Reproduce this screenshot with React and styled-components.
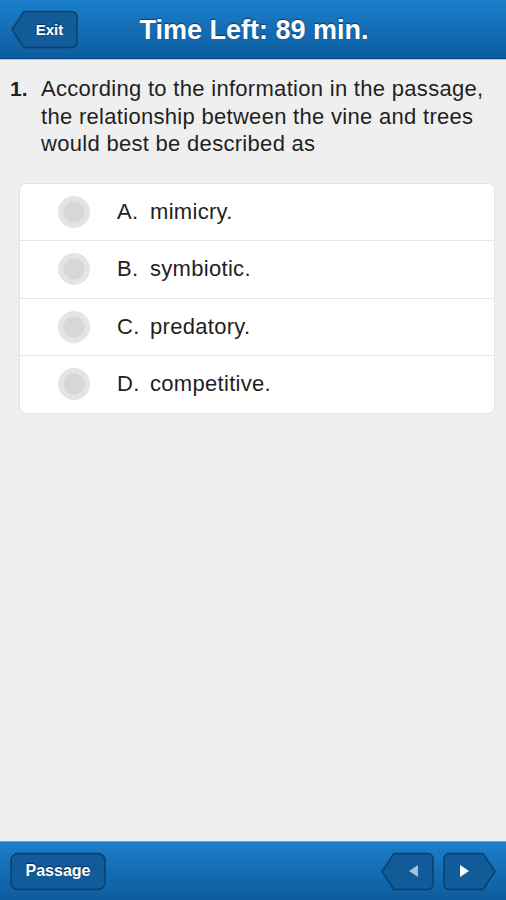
import React from "react";
import styled, { createGlobalStyle } from "styled-components";

const colors = {
    barTop: "#1b7fcb",
    barBottom: "#0d5c9e",
    barEdge: "#0a4a82",
    buttonFill: "#115b98",
    buttonStroke: "#0a3f6e",
    page: "#efefef",
    text: "#1f1f1f",
    line: "#e6e6e6",
    radioOuter: "#e4e4e4",
    radioInner: "#d7d7d7",
};

const GlobalStyle = createGlobalStyle`
    html, body {
        margin: 0;
        padding: 0;
        background: ${colors.page};
        font-family: "Liberation Sans", Arial, Helvetica, sans-serif;
    }
`;

const Screen = styled.div`
    width: 506px;
    height: 900px;
    display: flex;
    flex-direction: column;
    background: ${colors.page};
    overflow: hidden;
`;

const TopBar = styled.header`
    height: 58px;
    flex: none;
    display: grid;
    grid-template-columns: 1fr auto 1fr;
    align-items: center;
    padding: 0 11px;
    background: linear-gradient(${colors.barTop}, ${colors.barBottom});
    border-bottom: 1px solid ${colors.barEdge};
    box-shadow: 0 1px 0 #b9bec4;
`;

const Title = styled.h1`
    margin: 2px 0 0 2px;
    font-size: 27px;
    font-weight: bold;
    color: #fff;
    text-shadow: 0 -1px 1px rgba(0, 20, 60, 0.6);
`;

const ShapeButton = styled.button`
    position: relative;
    width: ${(p) => p.$w}px;
    height: 39px;
    padding: 0;
    padding-left: ${(p) => p.$padLeft || 0}px;
    padding-right: ${(p) => p.$padRight || 0}px;
    border: none;
    background: transparent;
    display: flex;
    align-items: center;
    justify-content: center;
    font-family: inherit;
    font-size: ${(p) => p.$size || 16}px;
    font-weight: bold;
    color: #fff;
    text-shadow: 0 -1px 1px rgba(0, 20, 60, 0.7);
    cursor: pointer;

    svg.shape {
        position: absolute;
        inset: 0;
    }
    span, svg.glyph {
        position: relative;
    }
`;

const Body = styled.main`
    flex: 1;
    padding: 16px 11px 0 10px;
`;

const Question = styled.div`
    display: flex;
    gap: 10px;
    font-size: 22px;
    letter-spacing: 0.3px;
    line-height: 27.5px;
    color: ${colors.text};
`;

const Number = styled.span`
    font-weight: bold;
    font-size: 21px;
    letter-spacing: 0;
    width: 21px;
    flex: none;
`;

const Card = styled.ul`
    list-style: none;
    margin: 25px 0 0 9px;
    padding: 0;
    background: #fff;
    border: 1px solid #e2e2e2;
    border-radius: 7px;
`;

const Option = styled.li`
    height: 56.5px;
    display: flex;
    align-items: center;
    padding-left: 38px;
    font-size: 22px;
    letter-spacing: 0.3px;
    color: ${colors.text};
    & + & {
        border-top: 1px solid ${colors.line};
    }
`;

const Radio = styled.span`
    width: 32px;
    height: 32px;
    border-radius: 50%;
    background: radial-gradient(circle, ${colors.radioInner} 0 10px, ${colors.radioOuter} 11px);
    margin-right: 27px;
    flex: none;
`;

const Letter = styled.span`
    width: 33px;
`;

const BottomBar = styled.footer`
    height: 58px;
    flex: none;
    display: flex;
    align-items: center;
    justify-content: space-between;
    padding: 0 10px;
    background: linear-gradient(${colors.barTop}, ${colors.barBottom});
    border-top: 1px solid #8b98a6;
`;

const Arrows = styled.div`
    display: flex;
    gap: 9px;
`;

function LeftShape({ w }) {
    return (
        <svg className="shape" width={w} height="39" viewBox={`0 0 ${w} 39`}>
            <path
                d={`M1 19.5 L13 1.5 H${w - 7} Q${w - 1} 1.5 ${w - 1} 7.5 V31.5 Q${w - 1} 37.5 ${w - 7} 37.5 H13 Z`}
                fill={colors.buttonFill}
                stroke={colors.buttonStroke}
                strokeWidth="1.5"
                strokeLinejoin="round"
            />
        </svg>
    );
}

function RightShape({ w }) {
    return (
        <svg className="shape" width={w} height="39" viewBox={`0 0 ${w} 39`}>
            <path
                d={`M${w - 1} 19.5 L${w - 13} 1.5 H7 Q1 1.5 1 7.5 V31.5 Q1 37.5 7 37.5 H${w - 13} Z`}
                fill={colors.buttonFill}
                stroke={colors.buttonStroke}
                strokeWidth="1.5"
                strokeLinejoin="round"
            />
        </svg>
    );
}

function RectShape({ w }) {
    return (
        <svg className="shape" width={w} height="39" viewBox={`0 0 ${w} 39`}>
            <rect x="1" y="1.5" width={w - 2} height="36" rx="7" fill={colors.buttonFill} stroke={colors.buttonStroke} strokeWidth="1.5" />
        </svg>
    );
}

const options = [
    { letter: "A.", text: "mimicry." },
    { letter: "B.", text: "symbiotic." },
    { letter: "C.", text: "predatory." },
    { letter: "D.", text: "competitive." },
];

export default function App() {
    return (
        <Screen>
            <GlobalStyle />
            <TopBar>
                <div>
                    <ShapeButton $w={67} $padLeft={10} $size={15}>
                        <LeftShape w={67} />
                        <span>Exit</span>
                    </ShapeButton>
                </div>
                <Title>Time Left: 89 min.</Title>
                <div />
            </TopBar>

            <Body>
                <Question>
                    <Number>1.</Number>
                    <span>According to the information in the passage, the relationship between the vine and trees would best be described as</span>
                </Question>
                <Card>
                    {options.map((o) => (
                        <Option key={o.letter}>
                            <Radio />
                            <Letter>{o.letter}</Letter>
                            <span>{o.text}</span>
                        </Option>
                    ))}
                </Card>
            </Body>

            <BottomBar>
                <ShapeButton $w={96}>
                    <RectShape w={96} />
                    <span>Passage</span>
                </ShapeButton>
                <Arrows>
                    <ShapeButton $w={53} $padLeft={12}>
                        <LeftShape w={53} />
                        <svg className="glyph" width="10" height="12" viewBox="0 0 10 12">
                            <path d="M9 0 V12 L0 6 Z" fill="#a8c2dc" />
                        </svg>
                    </ShapeButton>
                    <ShapeButton $w={53} $padRight={12}>
                        <RightShape w={53} />
                        <svg className="glyph" width="10" height="12" viewBox="0 0 10 12">
                            <path d="M1 0 V12 L10 6 Z" fill="#fff" />
                        </svg>
                    </ShapeButton>
                </Arrows>
            </BottomBar>
        </Screen>
    );
}
